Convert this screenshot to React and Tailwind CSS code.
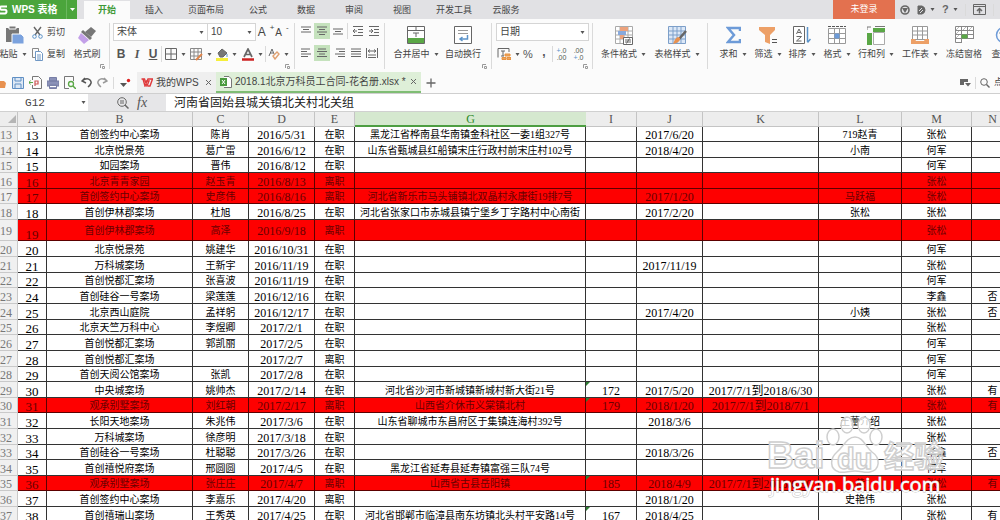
import { clsx } from 'clsx';

const TABS = ['插入', '页面布局', '公式', '数据', '审阅', '视图', '开发工具', '云服务'];

const COLUMNS = [
    { key: 'A', width: 'w-[29px]' },
    { key: 'B', width: 'w-[146px]' },
    { key: 'C', width: 'w-[56px]' },
    { key: 'D', width: 'w-[66px]' },
    { key: 'E', width: 'w-[40px]' },
    { key: 'G', width: 'w-[231px]' },
    { key: 'I', width: 'w-[51px]' },
    { key: 'J', width: 'w-[66px]' },
    { key: 'K', width: 'w-[116px]' },
    { key: 'L', width: 'w-[83px]' },
    { key: 'M', width: 'w-[70px]' },
    { key: 'N', width: 'w-[42px]' },
];

const ROWS = [
    { n: 13, A: '13', B: '首创签约中心案场', C: '陈肖', D: '2016/5/31', E: '在职', G: '黑龙江省桦南县华南镇金科社区一委1组327号', J: '2017/6/20', L: '719赵青', M: '张松', short: true },
    { n: 14, A: '14', B: '北京悦景苑', C: '葛广雷', D: '2016/6/12', E: '在职', G: '山东省甄城县红船镇宋庄行政村前宋庄村102号', J: '2018/4/20', L: '小南', M: '何军' },
    { n: 15, A: '15', B: '如园案场', C: '晋伟', D: '2016/8/12', E: '在职', M: '何军', short: true },
    { n: 16, A: '16', B: '北京青青家园', C: '赵玉青', D: '2016/8/13', E: '离职', M: '张松', left: true },
    { n: 17, A: '17', B: '首创签约中心案场', C: '史彦伟', D: '2016/8/16', E: '离职', G: '河北省新乐市马头铺镇北双晶村永康街19排7号', J: '2017/1/20', L: '马跃福', M: '张松', left: true, short: true },
    { n: 18, A: '18', B: '首创伊林郡案场', C: '杜旭', D: '2016/8/25', E: '在职', G: '河北省张家口市赤城县镇宁堡乡丁字路村中心南街', J: '2017/2/20', L: '张松', M: '张松' },
    { n: 19, A: '19', B: '首创伊林郡案场', C: '高泽', D: '2016/9/18', E: '离职', M: '张松', left: true, tall: true },
    { n: 20, A: '20', B: '北京悦景苑', C: '姚建华', D: '2016/10/31', E: '在职', M: '何军' },
    { n: 21, A: '21', B: '万科城案场', C: '王新宇', D: '2016/11/19', E: '在职', J: '2017/11/19', M: '张松' },
    { n: 22, A: '22', B: '首创悦都汇案场', C: '张喜波', D: '2016/11/19', E: '在职', M: '何军', short: true },
    { n: 23, A: '24', B: '首创硅谷一号案场', C: '梁莲莲', D: '2016/12/16', E: '在职', M: '李鑫', N: '否' },
    { n: 24, A: '25', B: '北京西山庭院', C: '孟祥躬', D: '2016/12/17', E: '在职', J: '2017/4/20', L: '小姨', M: '张松', N: '否' },
    { n: 25, A: '26', B: '北京天竺万科中心', C: '李煜卿', D: '2017/2/1', E: '在职', M: '张松', short: true },
    { n: 26, A: '27', B: '首创悦都汇案场', C: '郭凯丽', D: '2017/2/5', E: '在职', M: '何军' },
    { n: 27, A: '28', B: '首创悦都汇案场', D: '2017/2/7', E: '离职', M: '何军' },
    { n: 28, A: '29', B: '首创天阅公馆案场', C: '张凯', D: '2017/2/8', E: '在职', M: '何军', short: true },
    { n: 29, A: '30', B: '中央城案场', C: '姚帅杰', D: '2017/2/14', E: '在职', G: '河北省沙河市新城镇新城村新大街21号', I: '172', J: '2017/5/20', K: '2017/7/1到2018/6/30', M: '张松', N: '有' },
    { n: 30, A: '31', B: '观承别墅案场', C: '刘红朝', D: '2017/2/17', E: '离职', G: '山西省介休市义棠镇北村', I: '179', J: '2018/1/20', K: '2017/7/1到2018/7/1', M: '张松', N: '有', left: true, short: true },
    { n: 31, A: '32', B: '长阳天地案场', C: '朱兆伟', D: '2017/3/6', E: '在职', G: '山东省聊城市东昌府区于集镇连海村392号', J: '2018/3/6', L: '王蕾介绍', M: '张松' },
    { n: 32, A: '33', B: '万科城案场', C: '徐彦明', D: '2017/3/18', E: '在职', M: '张松' },
    { n: 33, A: '34', B: '首创硅谷一号案场', C: '杜聪聪', D: '2017/3/26', E: '在职', J: '2018/3/26', M: '李鑫', N: '否', short: true },
    { n: 34, A: '35', B: '首创禧悦府案场', C: '邢圆圆', D: '2017/4/5', E: '在职', G: '黑龙江省延寿县延寿镇富强三队74号', M: '何军' },
    { n: 35, A: '36', B: '观承别墅案场', C: '张庄庄', D: '2017/4/7', E: '离职', G: '山西省古县岳阳镇', I: '185', J: '2018/4/9', K: '2017/7/1到2018/6/30', L: '黄', M: '张松', N: '有', left: true, short: true },
    { n: 36, A: '37', B: '首创签约中心案场', C: '李嘉乐', D: '2017/4/20', E: '离职', J: '2018/1/20', L: '史艳伟', M: '张松' },
    { n: 37, A: '38', B: '首创禧瑞山案场', C: '王秀英', D: '2017/4/25', E: '在职', G: '河北省邯郸市临漳县南东坊镇北头村平安路14号', I: '167', J: '2018/4/25', M: '张松', N: '有' },
];

function Svg({ w = 14, h = 14, children, className }) {
    return (
        <svg width={w} height={h} viewBox={`0 0 ${w} ${h}`} fill="none" stroke="#666" strokeWidth="1" className={clsx('shrink-0', className)} aria-hidden="true">
            {children}
        </svg>
    );
}

function Caret({ className }) {
    return (
        <Svg w={5} h={3} className={className}>
            <path d="M0.5 0h4L2.5 3z" fill="#555" stroke="none" />
        </Svg>
    );
}

function Divider({ className }) {
    return <span className={clsx('w-px shrink-0 bg-[#dadada]', className)} />;
}

function Corner() {
    return (
        <Svg w={5} h={5} className="absolute right-1 bottom-0">
            <path d="M0.5 4V0.5H4M2.5 2.5h2v2h-2z" stroke="#999" />
        </Svg>
    );
}

function Group({ className, children, last }) {
    return (
        <div className={clsx('relative flex h-[46px] shrink-0', !last && 'border-r border-[#dadada]', className)}>
            {children}
        </div>
    );
}

// large icon above its label
function BigButton({ label, menu, className, children }) {
    return (
        <button type="button" className={clsx('flex shrink-0 flex-col items-center whitespace-nowrap', className)}>
            <span className="flex h-6 items-center">{children}</span>
            <span className="mt-px flex items-center gap-1 leading-3">
                {label}
                {menu && <Caret />}
            </span>
        </button>
    );
}

function SmallButton({ label, menu, className, children }) {
    return (
        <button type="button" aria-label={label} className={clsx('flex h-4 shrink-0 items-center justify-center gap-1', className)}>
            {children}
            {menu && <Caret />}
        </button>
    );
}

function Dropdown({ label, value, className }) {
    return (
        <label className={clsx('relative flex h-[18px] shrink-0 items-center border border-[#d5d5d5] bg-white', className)}>
            <select aria-label={label} className="w-full appearance-none bg-transparent pl-[3px] text-[10px] leading-4 text-[#444] outline-none">
                <option>{value}</option>
            </select>
            <Caret className="pointer-events-none absolute right-[3px]" />
        </label>
    );
}

function Lines({ spans, w = 12 }) {
    return (
        <Svg w={w} h={10}>
            {spans.map(([a, b], i) => (
                <path key={i} d={`M${a} ${i * 2.5 + 1}H${b}`} />
            ))}
        </Svg>
    );
}

function TitleBar() {
    return (
        <header className="flex h-[19px] shrink-0 items-stretch overflow-hidden bg-[#e1e1e4] text-[9px] text-[#444]">
            <button type="button" className="flex w-[77px] shrink-0 items-center bg-[#4ba53c] text-[10px] font-bold whitespace-nowrap text-white">
                <Svg w={8} h={12}>
                    <path d="M7 2.5H1.5Q0 2.5 0 4t1.5 1.8H5q1.5 0 1.5 1.8T5 9.5H0" stroke="#fff" strokeWidth="2" />
                </Svg>
                <span className="ml-1">WPS 表格</span>
                <span className="ml-auto flex h-full w-[11px] items-center justify-center border-l border-[#6bb85f]">
                    <svg width="5" height="3" aria-hidden="true"><path d="M0 0h5L2.5 3z" fill="#fff" /></svg>
                </span>
            </button>
            <nav className="flex shrink-0 pl-[7px]">
                <button type="button" className="mt-px w-[46px] bg-[#fbfbfb] pt-px font-bold text-[#3f9a36]">开始</button>
                {TABS.map((tab) => (
                    <button key={tab} type="button" className={clsx('pt-0.5 whitespace-nowrap', tab.length > 3 ? 'w-14' : 'w-12')}>
                        {tab}
                    </button>
                ))}
            </nav>
            <button type="button" className="ml-auto w-[62px] shrink-0 bg-[#e3714f] text-white">未登录</button>
            <div className="flex w-[105px] shrink-0 items-center gap-[7px] overflow-hidden pl-[5px]">
                <Svg w={10} h={10}>
                    <circle cx="5" cy="5" r="4" strokeWidth="1.6" />
                    <path d="M2 3h6L5 8z" fill="#666" stroke="none" />
                </Svg>
                <SmallButton label="云文档" menu className="gap-0.5">
                    <Svg w={9} h={10}>
                        <path d="M1 1h4q3 1 3 4T5 9H1z" fill="#666" />
                        <path d="M2 6l3-3M3 8l3-3" stroke="#e1e1e4" />
                    </Svg>
                </SmallButton>
                <SmallButton label="帮助" menu className="gap-0.5 text-[11px] font-bold text-[#666]">?</SmallButton>
                <Divider className="h-3 bg-[#aaa]" />
                <Svg w={13} h={11}>
                    <path d="M0.5 0.5h12v10H0.5zM0.5 2.5h12" />
                    <path d="M6.5 9.5V5M4 7l2.5-2.5L9 7" strokeWidth="1.5" />
                </Svg>
                <Divider className="h-3 bg-[#aaa]" />
                <Svg w={9} h={10}><path d="M0 5.5h9" strokeWidth="1.5" /></Svg>
            </div>
        </header>
    );
}

function ClipboardGroup() {
    return (
        <Group className="w-[110px]">
            <BigButton label="粘贴" menu className="w-[26px]">
                <Svg w={23} h={20}>
                    <path d="M4 3h13v14H4z" fill="#777" stroke="none" />
                    <path d="M7 1h7v3H7z" fill="#777" stroke="#fbfbfb" />
                    <path d="M10 9h9l3 3v7H10z" fill="#7ba2de" stroke="#fbfbfb" />
                </Svg>
            </BigButton>
            <div className="ml-[6px] flex w-[34px] flex-col gap-[5px] pt-px">
                <button type="button" className="flex h-[17px] items-center gap-1 whitespace-nowrap">
                    <Svg w={11} h={13}>
                        <path d="M2 1l6 8M9 1L3 9" strokeWidth="1.4" />
                        <circle cx="2.5" cy="10.5" r="1.8" stroke="#5b93c9" />
                        <circle cx="8.5" cy="10.5" r="1.8" stroke="#5b93c9" />
                    </Svg>
                    剪切
                </button>
                <button type="button" className="flex h-[17px] items-center gap-1 whitespace-nowrap">
                    <Svg w={11} h={13}>
                        <path d="M3 9.5H0.5v-9h6V3" stroke="#888" />
                        <path d="M3.5 3.5h5l2 2v7h-7z" fill="#fff" stroke="#6f97c4" />
                        <path d="M5 7h4M5 9h4M5 11h4" stroke="#6f97c4" />
                    </Svg>
                    复制
                </button>
            </div>
            <BigButton label="格式刷" className="ml-[6px] w-[30px]">
                <Svg w={19} h={19}>
                    <path d="M13 1l5 4-5 6-6-5z" fill="#777" stroke="none" />
                    <path d="M5 4l9 8-2 2-9-8z" fill="#777" stroke="none" />
                    <path d="M3 7l8 7-5 4-6-6z" fill="#c3a0e8" stroke="none" />
                </Svg>
            </BigButton>
            <Corner />
        </Group>
    );
}

function FontGroup() {
    return (
        <Group className="w-[185px] flex-col gap-[5px] pl-[3px]">
            <div className="flex items-center">
                <Dropdown label="字体" value="宋体" className="w-[95px]" />
                <Dropdown label="字号" value="10" className="-ml-px w-[49px]" />
                <SmallButton label="增大字号" className="ml-1 w-3 text-xs text-[#444]">A<sup className="text-[8px]">+</sup></SmallButton>
                <SmallButton label="减小字号" className="ml-1 w-3 text-[10px] text-[#444]">A<sup className="text-[8px]">-</sup></SmallButton>
            </div>
            <div className="flex items-center text-[12px] text-[#555]">
                <SmallButton label="加粗" className="w-4"><b>B</b></SmallButton>
                <SmallButton label="倾斜" className="w-4"><i className="font-['Liberation_Serif',serif] font-bold">I</i></SmallButton>
                <SmallButton label="下划线" className="w-4"><u className="font-semibold">U</u></SmallButton>
                <Divider className="h-4" />
                <SmallButton label="边框" menu className="w-[26px]">
                    <Svg w={12} h={12}><path d="M0.5 0.5h11v11h-11zM6 0v12M0 6h12" /></Svg>
                </SmallButton>
                <SmallButton label="绘图边框" menu className="w-[25px]">
                    <Svg w={13} h={13}>
                        <path d="M0.5 0.5h11v11h-11zM4 0v12M8 0v12M0 4h12M0 8h12" stroke="#888" />
                        <path d="M6 12l6-6" stroke="#e0854a" strokeWidth="2" />
                    </Svg>
                </SmallButton>
                <SmallButton label="填充颜色" menu className="w-[26px]">
                    <Svg w={12} h={13}>
                        <path d="M2 5l4-4 5 4-4 4H4z" fill="#777" />
                        <path d="M11 6v3" stroke="#5b93c9" />
                        <path d="M0 11.5h12" stroke="#f6ef3a" strokeWidth="3" />
                    </Svg>
                </SmallButton>
                <SmallButton label="字体颜色" menu className="w-[26px]">
                    <Svg w={12} h={13}>
                        <path d="M2 9L6 1l4 8M4 6.5h4" strokeWidth="1.7" />
                        <path d="M0 11.5h12" stroke="#c22" strokeWidth="2.5" />
                    </Svg>
                </SmallButton>
                <Divider className="h-4" />
                <SmallButton label="清除格式" menu className="w-6">
                    <Svg w={12} h={12}>
                        <path d="M1 8L4 1l2 5M2 5h3" />
                        <path d="M5 8l4-4 2 2-4 5z" stroke="#e0a070" strokeWidth="1.4" />
                    </Svg>
                </SmallButton>
            </div>
            <Corner />
        </Group>
    );
}

function AlignGroup() {
    return (
        <Group className="w-[90px] flex-col gap-[6px] pl-[3px]">
            <div className="flex items-center">
                <SmallButton label="顶端对齐" className="w-4"><Lines spans={[[1, 11], [3, 9], [1, 11]]} /></SmallButton>
                <SmallButton label="垂直居中" className="w-4 bg-[#c5e2bd]"><Lines spans={[[1, 11], [3, 9], [1, 11], [3, 9]]} /></SmallButton>
                <SmallButton label="底端对齐" className="w-4 pt-1"><Lines spans={[[1, 11], [3, 9], [1, 11]]} /></SmallButton>
                <Divider className="ml-px h-4" />
                <SmallButton label="减少缩进量" className="ml-0.5 w-4">
                    <Svg w={12} h={12}><path d="M1 1.5h10M6 4.5h5M6 7.5h5M1 10.5h10M5 6H1M3 4L1 6l2 2" /></Svg>
                </SmallButton>
                <SmallButton label="增加缩进量" className="w-4">
                    <Svg w={12} h={12}><path d="M1 1.5h10M6 4.5h5M6 7.5h5M1 10.5h10M5 6H1M3 4l2 2-2 2" /></Svg>
                </SmallButton>
            </div>
            <div className="flex items-center">
                <SmallButton label="左对齐" className="w-4"><Lines spans={[[1, 10], [1, 7], [1, 11], [1, 8]]} /></SmallButton>
                <SmallButton label="居中" className="w-4 bg-[#c5e2bd]"><Lines spans={[[2, 10], [1, 11], [3, 9], [1, 11]]} /></SmallButton>
                <SmallButton label="右对齐" className="ml-0.5 w-4"><Lines spans={[[2, 11], [5, 11], [1, 11], [4, 11]]} /></SmallButton>
                <SmallButton label="两端对齐" className="w-4"><Lines spans={[[1, 11], [1, 11], [1, 11], [1, 11]]} /></SmallButton>
                <SmallButton label="分散对齐" className="w-4">
                    <Svg w={12} h={12}><path d="M0.5 1v10M11.5 1v10M2 4h8M4 2.5L2 4l2 1.5M8 2.5L10 4 8 5.5M2 8h8M2 10.5h8" /></Svg>
                </SmallButton>
            </div>
        </Group>
    );
}

function NumberGroup() {
    return (
        <Group className="w-[101px] flex-col gap-[5px] pl-1">
            <Dropdown label="数字格式" value="日期" className="w-[93px]" />
            <div className="flex items-center text-[11px] text-[#555]">
                <SmallButton label="货币" menu className="w-6">
                    <Svg w={14} h={13}>
                        <path d="M1 9.5V0.5h11V4M4 3h4M6 3v5M4 8h3" />
                        <path d="M8 6h5v2H8zM5 9.5h4v2H5zM10 9.5h4v2h-4z" fill="#eda560" stroke="#e8923f" />
                    </Svg>
                </SmallButton>
                <SmallButton label="百分比" className="w-4">%</SmallButton>
                <SmallButton label="千位分隔" className="w-4 pb-1 text-[12px] font-bold">,</SmallButton>
                <Divider className="h-4" />
                <button type="button" aria-label="增加小数位" className="w-[17px] text-[7px] leading-[7px]"><span className="text-[#5b93c9]">+</span>.0<br />.00</button>
                <button type="button" aria-label="减少小数位" className="w-[17px] text-[7px] leading-[7px]">.00<br /><span className="text-[#5b93c9]">+</span>.0</button>
            </div>
            <Corner />
        </Group>
    );
}

const GRID = 'M0.5 0.5h17v17h-17zM0 5h18M0 9h18M0 13h18M5 0v18M9 0v18M13 0v18';

function Ribbon() {
    return (
        <section className="flex h-[53px] shrink-0 overflow-hidden bg-[#fbfbfb] pt-1 text-[9px] text-[#444]">
            <ClipboardGroup />
            <FontGroup />
            <AlignGroup />
            <Group className="w-[107px]">
                <BigButton label="合并居中" menu className="ml-1 w-[54px]">
                    <Svg w={18} h={18}>
                        <path d="M0.5 0.5h17v17h-17z" fill="#fff" />
                        <path d="M9 0v4M0 4.5h18M6 7h6M9 7v4" />
                        <path d="M1 12h16v5H1z" fill="#5aa746" stroke="none" />
                    </Svg>
                </BigButton>
                <BigButton label="自动换行" className="w-10">
                    <Svg w={18} h={18}>
                        <path d="M0.5 0.5h17v17h-17z" fill="#fff" />
                        <path d="M4 4.5h10M4 7.5h10" stroke="#999" />
                        <path d="M13.5 9v4H7M8.5 11L6 13l2.5 2" stroke="#5b93c9" strokeWidth="1.5" />
                    </Svg>
                </BigButton>
                <Corner />
            </Group>
            <NumberGroup />
            <Group className="w-[115px] pl-1">
                <BigButton label="条件格式" menu className="w-[53px]">
                    <Svg w={18} h={19}>
                        <path d={GRID} fill="#fff" stroke="#aaa" />
                        <path d="M5 1h8v4H5z" fill="#eca27c" stroke="none" />
                        <path d="M3 5h8v4H3z" fill="#88a9dc" stroke="none" />
                        <path d="M5 9h4v4H5z" fill="#eca27c" stroke="none" />
                        <path d="M8.5 11.5h9v7h-9z" fill="#fff" stroke="#666" />
                        <path d="M10 14h6M10 16h6M14.5 12.5l-3 5" />
                    </Svg>
                </BigButton>
                <BigButton label="表格样式" menu className="w-[54px]">
                    <Svg w={19} h={19}>
                        <path d={GRID} fill="#dce8f7" stroke="#7d9fc9" />
                        <path d="M18 5l-7 8" strokeWidth="2.5" />
                        <path d="M12 12q1 4-7 6 2-6 5-7z" fill="#e8914f" stroke="none" />
                    </Svg>
                </BigButton>
            </Group>
            <Group last className="pl-[7px]">
                <BigButton label="求和" menu className="w-9">
                    <Svg w={15} h={18}><path d="M14 5V2H2l6 7-6 7h12v-3" stroke="#6d9bd8" strokeWidth="2.5" /></Svg>
                </BigButton>
                <BigButton label="筛选" menu className="w-[34px]">
                    <Svg w={18} h={18}>
                        <path d="M0 1h16v3l-5 5v9l-5-2V9L0 4z" fill="#eda067" stroke="none" />
                        <path d="M13 13.5h5M13 16.5h5" stroke="#555" />
                    </Svg>
                </BigButton>
                <BigButton label="排序" menu className="w-[34px]">
                    <Svg w={18} h={18}>
                        <path d="M0.5 0.5h11v17h-11z" fill="#fff" />
                        <path d="M3.5 8L6 3l2.5 5M4.5 6.5h3M3.5 10.5h5l-5 4.5h5" />
                        <path d="M14.5 1v15M17.5 13l-3 3.5" stroke="#5b93c9" strokeWidth="1.5" />
                    </Svg>
                </BigButton>
                <BigButton label="格式" menu className="w-9">
                    <Svg w={18} h={18}>
                        <path d="M0.5 2.5h17v15h-17zM0 7.5h18M0 12.5h18M6.5 2v16M11.5 2v16" fill="#fff" stroke="#999" />
                        <path d="M7 8h4v4H7z" fill="#6d9bd8" stroke="#6d9bd8" />
                        <path d="M0 0.5h18" stroke="#555" strokeDasharray="3 1" />
                    </Svg>
                </BigButton>
                <BigButton label="行和列" menu className="w-[42px]">
                    <Svg w={18} h={19}>
                        <path d="M6.5 6.5h11v12h-11z" fill="#fff" stroke="#aaa" />
                        <path d="M6 2h12v4H6zM0 7h5v12H0z" fill="#5aa746" stroke="none" />
                        <path d="M0 4V1h4M8 0.5h10" stroke="#777" />
                    </Svg>
                </BigButton>
                <BigButton label="工作表" menu className="w-[46px]">
                    <Svg w={18} h={18}>
                        <path d="M1.5 0.5h15v13h-15zM1 5h15M1 9h15M6.5 0v13M11.5 0v13" fill="#fff" stroke="#999" />
                        <path d="M0 13h4l1 2h8l1-2h4v5H0z" fill="#eda067" stroke="none" />
                    </Svg>
                </BigButton>
                <BigButton label="冻结窗格" className="w-[42px]">
                    <Svg w={19} h={18}>
                        <path d="M18.5 13V0.5h-18v16h6M0 4.5h19M0 8.5h19M0 12.5h19M6.5 0v17M12.5 0v13" fill="#fff" stroke="#888" />
                        <path d="M7 9h5v3H7z" fill="#5aa746" stroke="#5aa746" />
                        <path d="M1 4l3-3M1 8l3-3M1 12l3-3M8 4l3-3M14 4l3-3" stroke="#bbb" />
                    </Svg>
                </BigButton>
                <BigButton label="查找" menu className="ml-1 w-8">
                    <Svg w={20} h={18}>
                        <circle cx="9" cy="9" r="7.5" stroke="#6d9bd8" strokeWidth="1.5" />
                        <circle cx="7" cy="7" r="2" />
                        <path d="M5 12q3 3 7 0M14 14l4 4" />
                    </Svg>
                </BigButton>
            </Group>
        </section>
    );
}

function CloseIcon() {
    return <Svg w={7} h={7}><path d="M1 1l5 5M6 1L1 6" /></Svg>;
}

function DocumentBar() {
    return (
        <section className="flex h-[22px] shrink-0 items-center overflow-hidden border-b border-[#cfcfcf] bg-[#fbfbfb] text-[9px] text-[#444]">
            <div className="flex w-[137px] shrink-0 items-center gap-[5px]">
                <Svg w={7} h={12}><path d="M0 4h4l2 2-1 5H0z" fill="#e8914f" stroke="none" /></Svg>
                <Svg w={12} h={12}>
                    <path d="M0.5 0.5h11v11h-11z" fill="#dde8f5" stroke="#5f8fc4" />
                    <path d="M3 1v3h6V1M3 11V7h6v4" stroke="#5f8fc4" />
                </Svg>
                <Svg w={13} h={13}>
                    <path d="M3.5 4V0.5h6l3 3v9h-9V9" stroke="#777" />
                    <path d="M6 10V5h3v3H6" stroke="#c55" strokeWidth="1.2" />
                    <path d="M0 6.5h4M1.5 4.5L0 6.5l1.5 2" stroke="#5aa746" />
                </Svg>
                <Svg w={12} h={12}>
                    <path d="M2.5 0.5h7V4h-7zM0 4h12v5H0zM2.5 8h7v3.5h-7z" fill="#8a91b8" stroke="#777ea6" />
                    <path d="M3 9.5h6" stroke="#fff" />
                </Svg>
                <Svg w={12} h={13}>
                    <path d="M5 12.5H0.5v-12h9V5" stroke="#777" />
                    <circle cx="7" cy="8" r="2.5" stroke="#5aa746" strokeWidth="1.3" />
                    <path d="M9 10l3 3" stroke="#5aa746" strokeWidth="1.5" />
                </Svg>
                <Svg w={11} h={11}><path d="M4 1L1 4l4 2M1 4q5-4 8-1t-2 7" stroke="#555" strokeWidth="1.5" /></Svg>
                <Svg w={11} h={11}><path d="M7 1l3 3-4 2M10 4Q5 0 2 3t2 7" stroke="#999" strokeWidth="1.5" /></Svg>
                <Divider className="h-3" />
                <Svg w={12} h={10}>
                    <path d="M1 5h7L4.5 9z" fill="#555" stroke="none" />
                    <circle cx="9.5" cy="2.5" r="1.7" fill="#d22" stroke="none" />
                </Svg>
            </div>
            <div className="flex h-full w-[79px] shrink-0 items-center bg-[#efefef] pl-1 text-[10px]">
                <Svg w={12} h={9}><path d="M0.5 1h3l2.5 7L8 3h-3M2 1l2 7L7 1h4.5L9 8H7" stroke="#e0393b" strokeWidth="1.4" /></Svg>
                <span className="ml-[3px] whitespace-nowrap">我的WPS</span>
                <button type="button" aria-label="关闭 我的WPS" className="ml-auto pr-1"><CloseIcon /></button>
            </div>
            <div className="flex h-full w-[205px] shrink-0 items-center border-b-2 border-[#7fbd74] bg-[#deefd8] pl-1 text-[10px]">
                <Svg w={12} h={12}>
                    <path d="M4 0.5h5l2.5 2.5v8.5H4" fill="#fff" stroke="#777" />
                    <path d="M0 2h7v8H0z" fill="#4a9b3f" stroke="none" />
                    <path d="M2 4l3 4M5 4L2 8" stroke="#fff" />
                </Svg>
                <span className="ml-[3px] whitespace-nowrap">2018.1北京万科员工合同-花名册.xlsx *</span>
                <button type="button" aria-label="关闭文档" className="ml-auto pr-1"><CloseIcon /></button>
            </div>
            <button type="button" aria-label="新建" className="ml-[5px]">
                <Svg w={10} h={10}><path d="M5 0.5v9M0.5 5h9" strokeWidth="1.3" /></Svg>
            </button>
            <div className="ml-auto flex w-10 shrink-0 items-center gap-1 whitespace-nowrap">
                <Svg w={11} h={9}>
                    <path d="M0 1h8v3H4v3H0z" fill="#666" stroke="none" />
                    <path d="M5 5h6L8 8.5z" fill="#666" stroke="none" />
                </Svg>
                <Divider className="h-3" />
                <Svg w={10} h={10}>
                    <circle cx="4" cy="4" r="3.3" />
                    <path d="M6.5 6.5l3 3" strokeWidth="1.4" />
                </Svg>
                点击
            </div>
        </section>
    );
}

function FormulaBar() {
    return (
        <section className="flex h-[18px] shrink-0 items-center border-b border-[#d0d0d0] bg-[#e6e6e8]">
            <label className="relative flex h-[17px] w-[88px] shrink-0 items-center bg-white">
                <input aria-label="名称框" defaultValue="G12" className="w-[70px] pt-px text-center font-['Liberation_Mono',monospace] text-[11px] text-[#444] outline-none" />
                <Caret className="absolute right-[2px]" />
            </label>
            <div className="flex w-[78px] shrink-0 items-center justify-end gap-2 pr-[13px]">
                <Svg w={12} h={12}>
                    <circle cx="5" cy="5" r="4.3" />
                    <path d="M8 8l3.5 3.5" strokeWidth="1.5" />
                    <path d="M3 4h4M3 6h4" />
                </Svg>
                <i className="w-4 font-['Liberation_Serif',serif] text-sm leading-4 text-[#555]">fx</i>
            </div>
            <input
                aria-label="编辑栏"
                defaultValue="河南省固始县城关镇北关村北关组"
                className="h-[17px] min-w-0 flex-1 bg-white pt-px pl-2 text-[12px] text-[#222] outline-none"
            />
        </section>
    );
}

function Cell({ column, row }) {
    const value = row[column];
    const numeric = ['D', 'I', 'J', 'K'].includes(column);
    return (
        <td
            className={clsx(
                'relative overflow-hidden border-r border-b p-0 text-center whitespace-nowrap',
                row.left ? 'border-[#5c0000]' : 'border-[#333]',
                column === 'A' && 'align-bottom text-[13px] leading-[11px]',
                column !== 'A' && 'pt-0.5',
                column !== 'A' && (numeric ? 'text-[12px]' : 'text-[10px]'),
            )}
        >
            {value}
            {column === 'I' && value && <span className="absolute top-0 left-0 border-t-4 border-r-4 border-t-[#2d7d32] border-r-transparent" />}
        </td>
    );
}

function Sheet() {
    return (
        <main className="relative min-h-0 flex-1 overflow-hidden bg-white">
            <table className="w-full min-w-[1014px] table-fixed border-separate border-spacing-0 font-['Liberation_Serif','Noto_Sans_CJK_SC',serif] leading-[12px] text-black">
                <thead>
                    <tr className="h-[15px] bg-[#ededed] text-xs leading-[12px] text-[#555]">
                        <th className="w-[18px] border-r border-b border-[#c4c4c4] p-0">
                            <Svg w={9} h={8} className="ml-auto"><path d="M8 0v8H0z" fill="#b5b5b5" stroke="none" /></Svg>
                        </th>
                        {COLUMNS.map(({ key, width }) => (
                            <th
                                key={key}
                                scope="col"
                                className={clsx(
                                    'p-0 font-normal',
                                    width,
                                    key === 'G' ? 'border-b-2 border-[#4d9e42] bg-[#d5e8cf] text-[#2f8a2a]' : 'border-r border-b border-[#c4c4c4]',
                                )}
                            >
                                {key}
                            </th>
                        ))}
                    </tr>
                </thead>
                <tbody>
                    {ROWS.map((row) => (
                        <tr
                            key={row.n}
                            className={clsx(
                                row.tall && 'h-[21px]',
                                row.short && 'h-[15px]',
                                !row.tall && !row.short && 'h-[16px]',
                                row.left && 'bg-[#fe0000] text-[#680000]',
                            )}
                        >
                            <th scope="row" className="border-r border-b border-[#c9c9c9] bg-[#f0f0f0] p-0 pt-0.5 text-left text-xs leading-[12px] font-normal text-[#777]">
                                {row.n}
                            </th>
                            {COLUMNS.map(({ key }) => (
                                <Cell key={key} column={key} row={row} />
                            ))}
                        </tr>
                    ))}
                </tbody>
            </table>
            <Watermark />
        </main>
    );
}

function Watermark() {
    return (
        <svg
            width="182"
            height="90"
            viewBox="0 0 182 90"
            className="pointer-events-none absolute right-[52px] bottom-[16px] font-['Liberation_Sans','Noto_Sans_CJK_SC',sans-serif]"
        >
            <g fill="#fff" fillOpacity="0.75" stroke="#cfcfcf" strokeWidth="1.5">
                <text x="1" y="54" fontSize="37" fontWeight="bold">Bai</text>
                <ellipse cx="67" cy="23" rx="6" ry="8" />
                <ellipse cx="81" cy="11" rx="6" ry="8" />
                <ellipse cx="98" cy="11" rx="6" ry="8" />
                <ellipse cx="110" cy="23" rx="6" ry="8" />
                <path d="M89 23c8 0 10 9 17 15 9 6 8 18-2 20-5 1-9-1-15-1s-11 2-16 1c-10-3-9-14-2-20 7-6 10-15 18-15z" />
                <text x="71" y="55" fontSize="29" fontWeight="bold">du</text>
                <text x="118" y="53" fontSize="30" fontWeight="bold">经验</text>
            </g>
            <text x="4" y="78" fontSize="20" fontWeight="500" stroke="#c4c4c4" strokeWidth="1" paintOrder="stroke" fill="#fff" className="font-['Open_Sans',sans-serif]">
                jingyan.baidu.com
            </text>
        </svg>
    );
}

export default function App() {
    return (
        <div className="flex h-screen flex-col overflow-hidden bg-[#fbfbfb] font-['Liberation_Sans','Noto_Sans_CJK_SC',sans-serif]">
            <TitleBar />
            <Ribbon />
            <DocumentBar />
            <FormulaBar />
            <Sheet />
        </div>
    );
}
